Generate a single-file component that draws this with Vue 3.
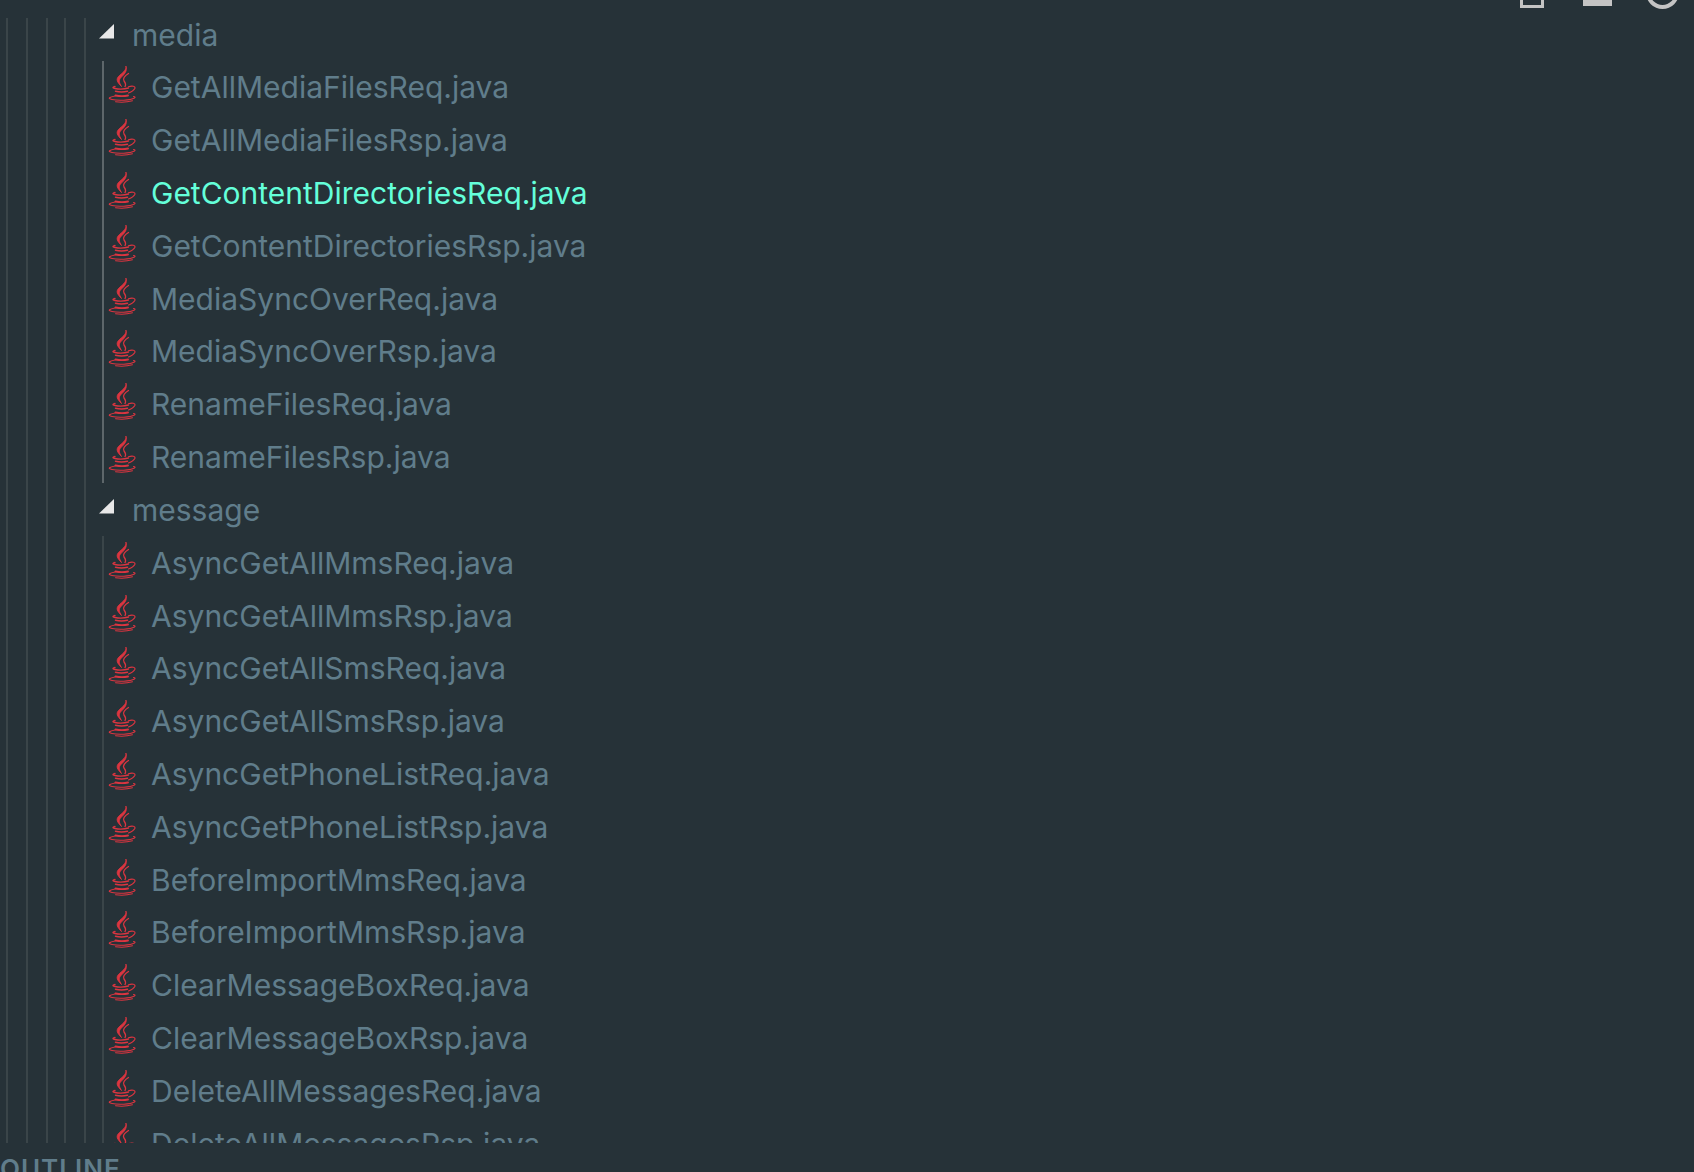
<script setup>
const media = ['GetAllMediaFilesReq.java','GetAllMediaFilesRsp.java','GetContentDirectoriesReq.java','GetContentDirectoriesRsp.java','MediaSyncOverReq.java','MediaSyncOverRsp.java','RenameFilesReq.java','RenameFilesRsp.java']
const message = ['AsyncGetAllMmsReq.java','AsyncGetAllMmsRsp.java','AsyncGetAllSmsReq.java','AsyncGetAllSmsRsp.java','AsyncGetPhoneListReq.java','AsyncGetPhoneListRsp.java','BeforeImportMmsReq.java','BeforeImportMmsRsp.java','ClearMessageBoxReq.java','ClearMessageBoxRsp.java','DeleteAllMessagesReq.java','DeleteAllMessagesRsp.java']
const groups = [
  { name: 'media', files: media, active: 'GetContentDirectoriesReq.java' },
  { name: 'message', files: message, active: '' }
]
</script>

<template>
  <div class="window">
    <div class="toolbar">
      <span class="tool-square"></span>
      <span class="tool-fill"></span>
      <span class="tool-circle"></span>
    </div>
    <div class="tree-wrap">
      <div class="guides">
        <i class="guide"></i><i class="guide"></i><i class="guide"></i><i class="guide"></i><i class="guide"></i>
      </div>
      <div class="tree">
        <section v-for="g in groups" :key="g.name" class="group">
          <div class="folder">
            <svg class="twist" width="16" height="15" viewBox="0 0 16 15"><path d="M15 0V14.500H0Z" fill="#e8e8e8"/></svg>
            <span class="folder-name">{{ g.name }}</span>
          </div>
          <div class="files" :class="{ current: g.active }">
            <div v-for="f in g.files" :key="f" class="file">
              <svg class="java" width="30" height="38" viewBox="0 0 30 38" fill="none" stroke="#dc3540" stroke-linecap="round">
                <path d="M19 1.500C20 5 15 8 11.500 11.500C9 14.500 10 17 14.500 21.500C12 17.500 11.500 15 14 12.500C17 9.500 20.500 6.500 19 1.500Z" stroke-width="0.900" fill="#dc3540"/>
                <path d="M21.500 8.500C17.500 11 15.500 13.500 17 16C18.500 18 19.500 19.500 18 21.500" stroke-width="1.300"/>
                <path d="M8 21.500C5.500 22 5 23 8 23.500C12 24.300 18 24 21.500 23" stroke-width="1.400"/>
                <path d="M21.500 21.700C25 20.500 28.800 21 27.800 23.500C26.800 25.500 24 27 21.500 28" stroke-width="1.200"/>
                <path d="M8.500 26.200C12 27 17 27 20.500 26.200" stroke-width="1.500"/>
                <path d="M8.500 30.500C13 31.400 17 31.400 21 30.500" stroke-width="1.900"/>
                <path d="M8 31C2.500 32 0 33.500 5 34.500C11 35.800 23 35.500 27.500 33C28.500 32.300 28 31.800 26.500 31.500" stroke-width="1.100"/>
                <path d="M8.500 36.800C14 37.500 20 37.300 25.500 35.800" stroke-width="1.100"/>
              </svg>
              <span class="file-name" :class="{ active: f === g.active }">{{ f }}</span>
            </div>
          </div>
        </section>
      </div>
    </div>
    <div class="outline">OUTLINE</div>
  </div>
</template>

<style>
body { margin: 0; background: #263238; }
</style>

<style scoped>
.window {
  width: 1694px;
  height: 1172px;
  overflow: hidden;
  background: #263238;
  font-family: Inter, "Liberation Sans", sans-serif;
  display: flex;
  flex-direction: column;
  position: relative;
}
.toolbar {
  position: absolute;
  top: 0;
  left: 1520px;
  width: 174px;
  height: 10px;
  overflow: hidden;
}
.tool-square { position: absolute; left: 0; top: -20px; width: 18px; height: 22px; border: 3px solid #c4c4c4; }
.tool-fill { position: absolute; left: 63px; top: 0; width: 29px; height: 6px; background: #c4c4c4; }
.tool-circle { position: absolute; left: 126px; top: -24px; width: 25px; height: 25px; border: 4px solid #c4c4c4; border-radius: 50%; }
.tree-wrap {
  display: flex;
  height: 1143px;
  overflow: hidden;
  flex: none;
}
.guides {
  display: flex;
  flex: none;
  width: 92px;
  padding: 18px 0 0 6px;
  box-sizing: border-box;
  gap: 18px;
}
.guide { width: 2px; background: #3a4549; flex: none; }
.guide:nth-child(4) { margin-left: -2px; }
.tree { padding-top: 8px; flex: 1; }
.folder {
  height: 53px;
  display: flex;
  align-items: center;
  padding-left: 7px;
}
.twist { margin-right: 17px; margin-top: -7px; }
.folder-name, .file-name { font-size: 30px; color: #607d8b; line-height: 1; white-space: nowrap; }
.files {
  margin-left: 10px;
  border-left: 2px solid #3a4549;
}
.files.current { border-left-color: #5d666a; }
.file {
  height: 52.800px;
  display: flex;
  align-items: center;
  padding-left: 3px;
}
.java { flex: none; margin-right: 14px; margin-top: -6px; }
.file-name.active { color: #64ffda; }
.outline {
  padding-top: 13px;
  font-size: 26px;
  font-weight: 600;
  letter-spacing: 1px;
  color: #607d8b;
  line-height: 1;
}
</style>
